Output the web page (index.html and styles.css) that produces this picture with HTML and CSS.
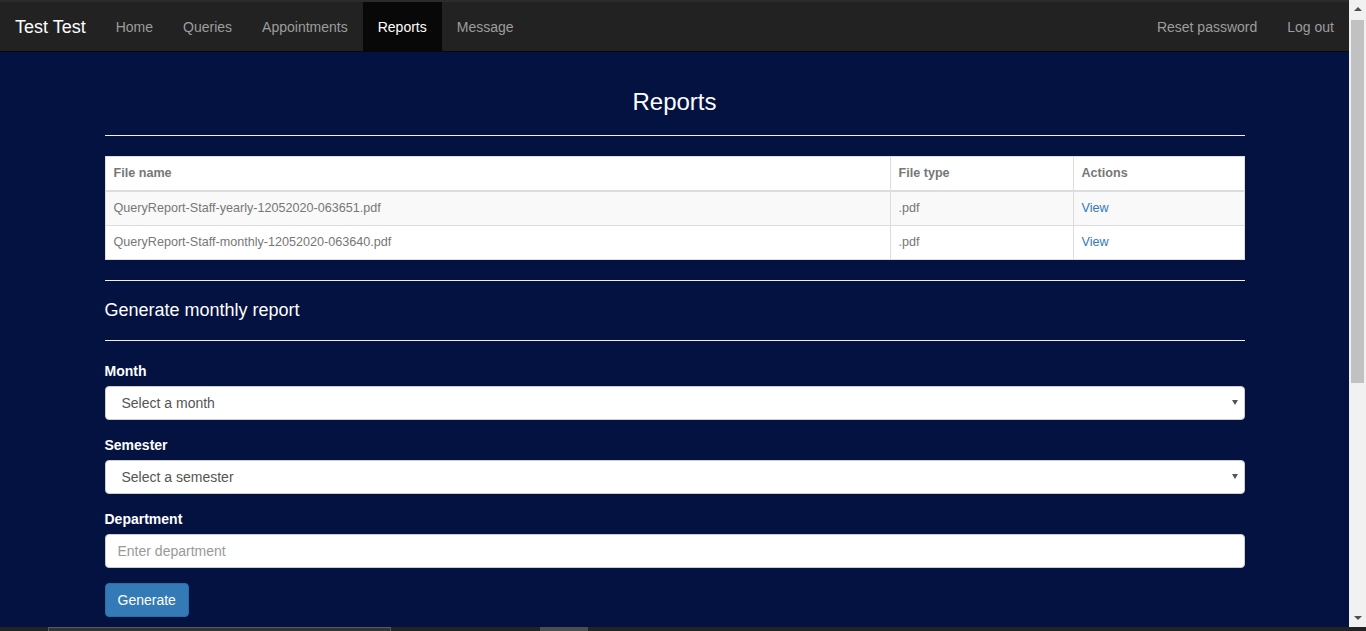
FILE: index.html
```html
<!DOCTYPE html>
<html lang="en">
<head>
<meta charset="utf-8">
<title>Reports</title>
<link rel="stylesheet" href="styles.css">
</head>
<body>
<div class="screen">
  <div class="viewport">
    <div class="page">
      <nav class="navbar">
        <div class="nav-left">
          <a class="brand" href="#">Test Test</a>
          <a class="nav-link" href="#">Home</a>
          <a class="nav-link" href="#">Queries</a>
          <a class="nav-link" href="#">Appointments</a>
          <a class="nav-link active" href="#">Reports</a>
          <a class="nav-link" href="#">Message</a>
        </div>
        <div class="nav-right">
          <a class="nav-link" href="#">Reset password</a>
          <a class="nav-link" href="#">Log out</a>
        </div>
      </nav>
      <main class="container">
        <h3 class="page-title">Reports</h3>
        <hr class="rule">
        <table class="table">
          <thead>
            <tr><th class="col-name">File name</th><th class="col-type">File type</th><th>Actions</th></tr>
          </thead>
          <tbody>
            <tr class="striped"><td>QueryReport-Staff-yearly-12052020-063651.pdf</td><td>.pdf</td><td><a href="#">View</a></td></tr>
            <tr><td>QueryReport-Staff-monthly-12052020-063640.pdf</td><td>.pdf</td><td><a href="#">View</a></td></tr>
          </tbody>
        </table>
        <hr class="rule">
        <h4 class="section-title">Generate monthly report</h4>
        <hr class="rule">
        <form class="form">
          <div class="form-group">
            <label class="label">Month</label>
            <div class="select-wrap">
              <select class="control select"><option>Select a month</option></select>
            </div>
          </div>
          <div class="form-group">
            <label class="label">Semester</label>
            <div class="select-wrap">
              <select class="control select"><option>Select a semester</option></select>
            </div>
          </div>
          <div class="form-group">
            <label class="label">Department</label>
            <input class="control input" type="text" placeholder="Enter department">
          </div>
          <button class="btn" type="button">Generate</button>
        </form>
      </main>
    </div>
    <div class="vscroll">
      <div class="sb-btn sb-up"></div>
      <div class="sb-track"><div class="sb-thumb"></div></div>
      <div class="sb-btn sb-down"></div>
    </div>
  </div>
  <div class="bottom-strip">
    <div class="strip-a"></div>
    <div class="strip-b"></div>
  </div>
</div>
</body>
</html>
```
FILE: styles.css
```css
* { box-sizing: border-box; }
html, body { margin: 0; padding: 0; height: 100%; overflow: hidden; }
body {
  font-family: "Liberation Sans", Arial, Helvetica, sans-serif;
  font-size: 14px;
  line-height: 1.42857;
  color: #333;
  background: #031241;
}
.screen { display: flex; flex-direction: column; height: 631px; }
.viewport { display: flex; height: 627px; }
.page { flex: 1; background: #031241; overflow: hidden; }

.navbar {
  display: flex;
  justify-content: space-between;
  background: #222;
  border-top: 2px solid #2b2b2b;
  border-bottom: 1px solid #080808;
  height: 52px;
}
.nav-left, .nav-right { display: flex; }
.brand {
  padding: 15px 15px 0;
  font-size: 18px;
  line-height: 20px;
  color: #fff;
  text-decoration: none;
  height: 49px;
}
.nav-link {
  padding: 15px 15px 0;
  line-height: 20px;
  color: #9d9d9d;
  text-decoration: none;
  height: 49px;
}
.nav-link.active { background: #080808; color: #fff; }

.container { width: 1140px; margin: 0 auto; }
.page-title {
  margin: 37px 0 0;
  font-size: 24px;
  line-height: 26px;
  font-weight: 500;
  text-align: center;
  color: #fff;
}
.rule { margin: 20px 0; border: 0; border-top: 1px solid #eee; height: 0; }
.section-title {
  margin: 0;
  font-size: 18px;
  line-height: 19px;
  font-weight: 500;
  color: #fff;
}

.table {
  width: 100%;
  border-collapse: collapse;
  background: #fff;
  font-size: 12.6px;
  line-height: 17px;
  color: #777;
  margin-bottom: 20px;
}
.table th, .table td {
  border: 1px solid #ddd;
  padding: 8px;
  text-align: left;
}
.table th { font-weight: bold; border-bottom-width: 2px; }
.table .col-name { width: 785px; }
.table .col-type { width: 183px; }
.table tr.striped td { background: #f9f9f9; }
.table a { color: #337ab7; text-decoration: none; }

.form-group { margin-bottom: 15px; }
.label {
  display: block;
  font-weight: bold;
  color: #fff;
  margin-bottom: 5px;
  line-height: 20px;
}
.control {
  display: block;
  width: 100%;
  height: 34px;
  padding: 6px 12px;
  font-family: inherit;
  font-size: 14px;
  line-height: 20px;
  color: #555;
  background: #fff;
  border: 1px solid #ccc;
  border-radius: 4px;
}
.input::placeholder { color: #999; }
.select { appearance: none; -webkit-appearance: none; padding-left: 16px; }
.select-wrap { position: relative; }
.select-wrap::after {
  content: "";
  position: absolute;
  right: 7px;
  top: 14px;
  border-left: 3px solid transparent;
  border-right: 3px solid transparent;
  border-top: 5px solid #555;
}
.btn {
  height: 34px;
  padding: 6px 12px;
  font-family: inherit;
  font-size: 14px;
  line-height: 20px;
  color: #fff;
  background: #337ab7;
  border: 1px solid #2e6da4;
  border-radius: 4px;
}

.vscroll {
  width: 17px;
  background: #f1f1f1;
  display: flex;
  flex-direction: column;
}
.sb-btn { height: 17px; position: relative; }
.sb-up::after, .sb-down::after {
  content: "";
  position: absolute;
  left: 5px;
  border-left: 4px solid transparent;
  border-right: 4px solid transparent;
}
.sb-up::after { top: 7px; border-bottom: 4px solid #505050; }
.sb-down::after { top: 6px; border-top: 4px solid #505050; }
.sb-track { flex: 1; padding: 3px 2px 0; }
.sb-thumb { height: 363px; background: #c1c1c1; }

.bottom-strip {
  height: 4px;
  background: #232323;
  display: flex;
}
.strip-a {
  margin-left: 48px;
  width: 343px;
  background: #333;
  border-top: 1px solid #5a5a5a;
  border-left: 1px solid #5a5a5a;
  border-right: 1px solid #5a5a5a;
}
.strip-b {
  margin-left: 149px;
  width: 48px;
  background: #4d4d4d;
}
```
